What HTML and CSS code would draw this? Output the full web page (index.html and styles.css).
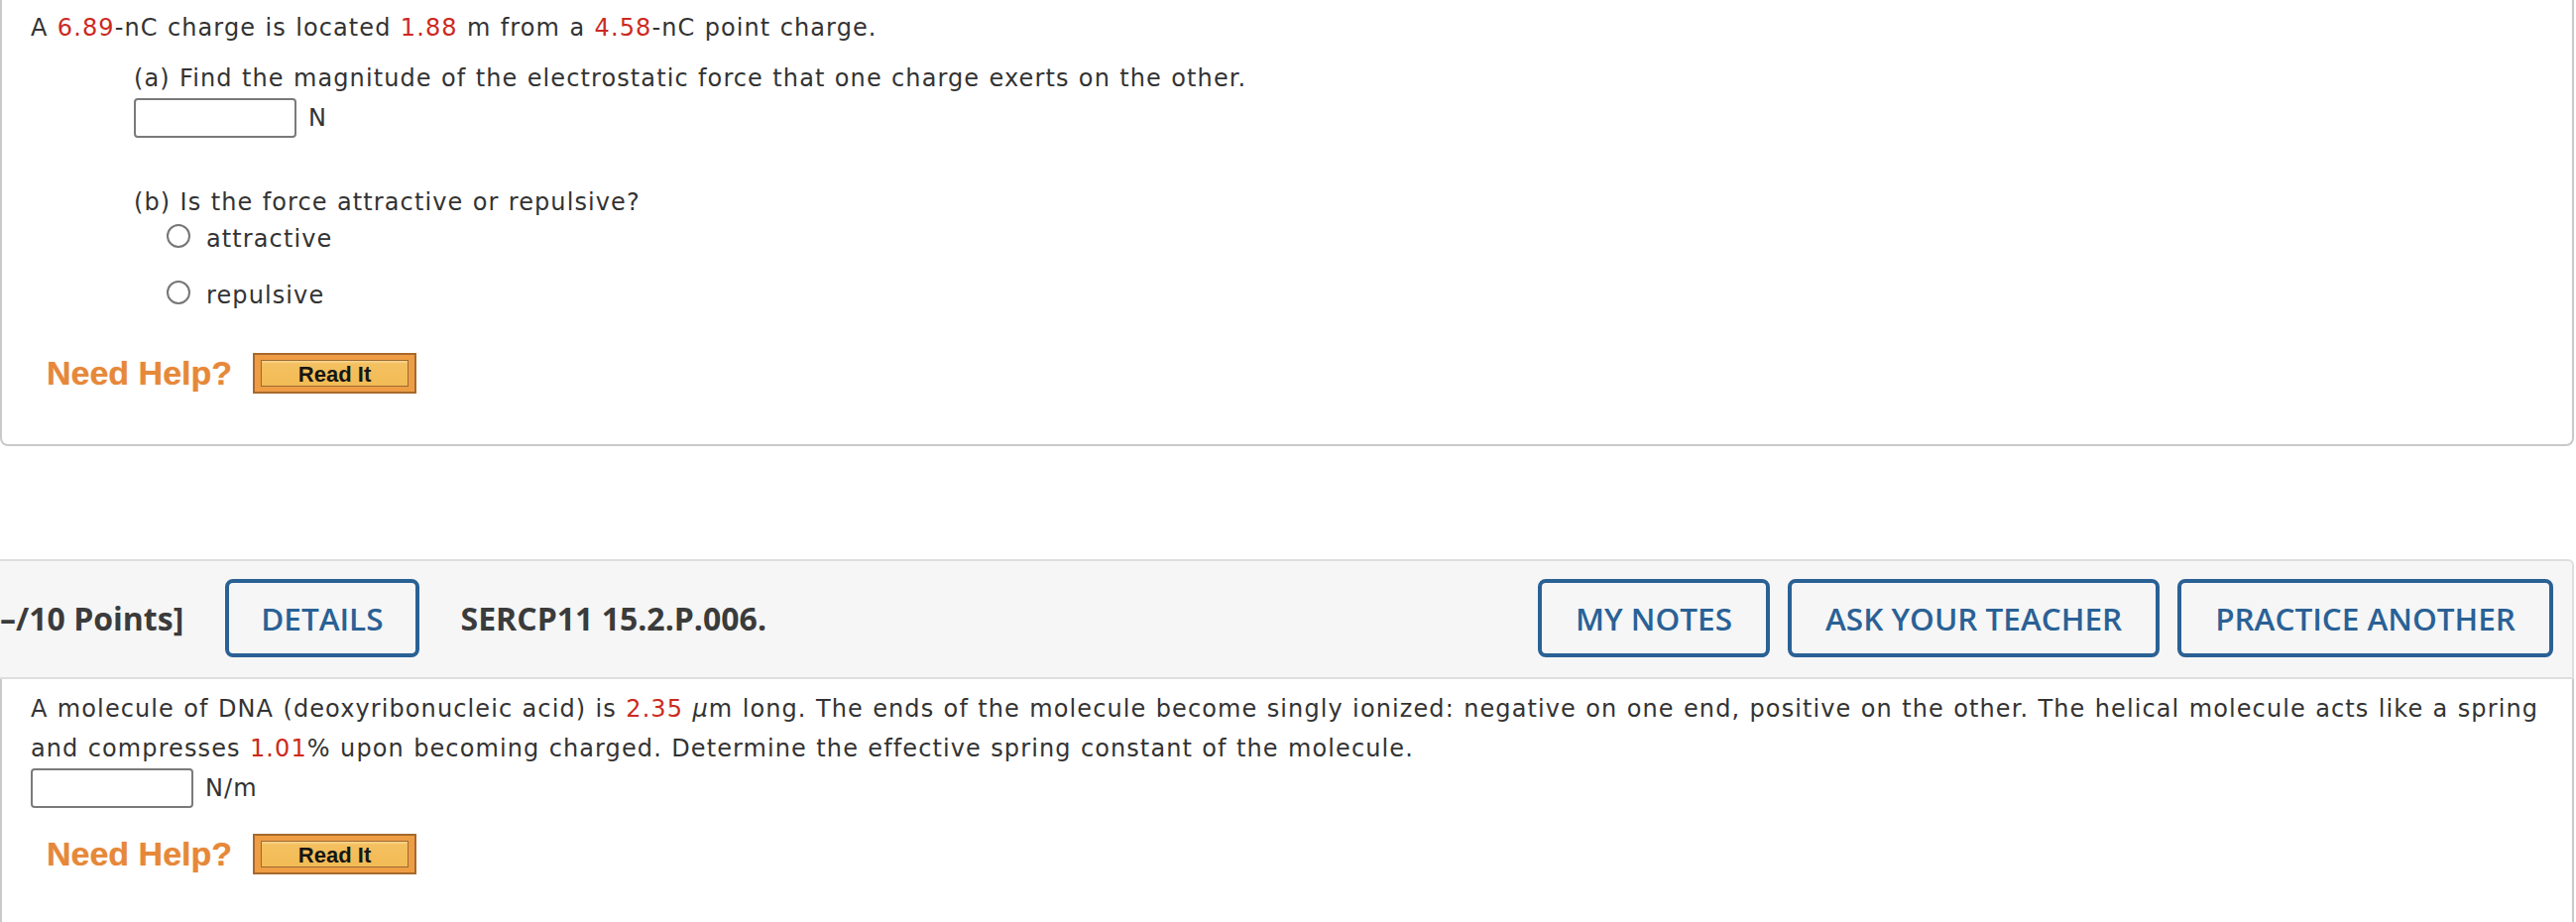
FILE: index.html
```html
<!DOCTYPE html>
<html lang="en">
<head>
<meta charset="utf-8">
<title>Questions</title>
<link rel="stylesheet" href="styles.css">
</head>
<body>
<div class="page">
  <section class="panel panel-first">
    <div class="q-line">A <span class="num">6.89</span>-nC charge is located <span class="num">1.88</span> m from a <span class="num">4.58</span>-nC point charge.</div>
    <div class="sub">
      <div class="q-line part-a">(a) Find the magnitude of the electrostatic force that one charge exerts on the other.</div>
      <div class="answer"><span class="box"></span><span class="unit">N</span></div>
      <div class="q-line part-b">(b) Is the force attractive or repulsive?</div>
      <div class="radio-row"><span class="radio"></span>attractive</div>
      <div class="radio-row radio-second"><span class="radio"></span>repulsive</div>
    </div>
    <div class="help help-first">
      <span class="need">Need Help?</span>
      <span class="readit"><span class="readit-inner">Read It</span></span>
    </div>
  </section>

  <header class="qhead">
    <span class="points">–/10 Points]</span>
    <span class="btn details">DETAILS</span>
    <span class="code">SERCP11 15.2.P.006.</span>
    <span class="spacer"></span>
    <span class="btn">MY NOTES</span>
    <span class="btn">ASK YOUR TEACHER</span>
    <span class="btn">PRACTICE ANOTHER</span>
  </header>

  <section class="panel panel-second">
    <div class="q-line">A molecule of DNA (deoxyribonucleic acid) is <span class="num">2.35</span> <span class="mu">μ</span>m long. The ends of the molecule become singly ionized: negative on one end, positive on the other. The helical molecule acts like a spring and compresses <span class="num">1.01</span>% upon becoming charged. Determine the effective spring constant of the molecule.</div>
    <div class="answer"><span class="box"></span><span class="unit">N/m</span></div>
    <div class="help help-second">
      <span class="need">Need Help?</span>
      <span class="readit"><span class="readit-inner">Read It</span></span>
    </div>
  </section>
</div>
</body>
</html>
```

FILE: styles.css
```css
html, body {
  margin: 0;
  padding: 0;
  background: #ffffff;
  overflow: hidden;
}

body {
  font-family: "DejaVu Sans", Verdana, sans-serif;
  font-size: 24px;
  color: #333333;
}

.page {
  width: 2596px;
}

.panel {
  border: 2px solid #c9c9c9;
  border-top: none;
  padding: 8px 29px 51px 29px;
  background: #ffffff;
}

.panel-first {
  border-radius: 0 0 8px 8px;
}

.panel-second {
  border-bottom: none;
  padding-top: 10px;
  height: 300px;
}

.q-line {
  line-height: 40px;
  letter-spacing: 1.1px;
  word-spacing: 0.6px;
}

.num {
  color: #cc2a1f;
}

.mu {
  font-style: italic;
}

.sub {
  margin-left: 104px;
}

.part-a {
  margin-top: 11px;
}

.answer {
  display: flex;
  align-items: center;
  height: 40px;
}

.box {
  display: inline-block;
  width: 164px;
  height: 40px;
  box-sizing: border-box;
  border: 2px solid #7a7a7a;
  border-radius: 4px;
  background: #ffffff;
}

.unit {
  margin-left: 12px;
  line-height: 40px;
  letter-spacing: 1.1px;
}

.part-b {
  margin-top: 45px;
}

.radio-row {
  line-height: 34px;
  margin-left: 33px;
  letter-spacing: 1.1px;
}

.radio-second {
  margin-top: 23px;
}

.radio {
  display: inline-block;
  width: 24px;
  height: 24px;
  box-sizing: border-box;
  border: 2px solid #767676;
  border-radius: 50%;
  background: #ffffff;
  vertical-align: -1px;
  margin-right: 16px;
}

.help {
  display: flex;
  align-items: flex-start;
  height: 41px;
  margin-left: 16px;
}

.help-first {
  margin-top: 41px;
}

.help-second {
  margin-top: 26px;
}

.need {
  font-family: "Liberation Sans", Arial, sans-serif;
  font-weight: 700;
  font-size: 34px;
  line-height: 41px;
  color: #e6883a;
  text-shadow: 0 0 1px rgba(230, 136, 58, 0.6);
}

.readit {
  margin-left: 21px;
  width: 165px;
  height: 41px;
  box-sizing: border-box;
  border: 2px solid #a8692c;
  background: #ee9d45;
  padding: 5px 6px;
  display: flex;
}

.readit-inner {
  flex: 1;
  border: 1px solid #9c6a33;
  background: linear-gradient(#f9d792 0, #f4c060 3px, #f2bb55 100%);
  font-family: "Liberation Sans", Arial, sans-serif;
  font-weight: 700;
  font-size: 22px;
  line-height: 27px;
  color: #161616;
  text-align: center;
}

.qhead {
  margin-top: 114px;
  margin-left: -2px;
  display: flex;
  align-items: center;
  background: #f6f6f6;
  border: 2px solid #dedede;
  border-radius: 0 6px 0 0;
  padding: 18px 19px 20px 0;
  font-family: "Open Sans", sans-serif;
}

.points {
  font-weight: 700;
  font-size: 32px;
  color: #3b3b3b;
}

.btn {
  display: inline-block;
  height: 79px;
  box-sizing: border-box;
  border: 4px solid #2a6195;
  border-radius: 8px;
  padding: 0 34px;
  font-weight: 600;
  font-size: 31.5px;
  line-height: 71px;
  color: #2a6195;
  white-space: nowrap;
}

.btn + .btn {
  margin-left: 18px;
}

.details {
  margin-left: 42px;
  padding: 0 32px;
}

.code {
  margin-left: 42px;
  font-weight: 700;
  font-size: 32px;
  color: #3b3b3b;
}

.spacer {
  flex: 1;
}
```
